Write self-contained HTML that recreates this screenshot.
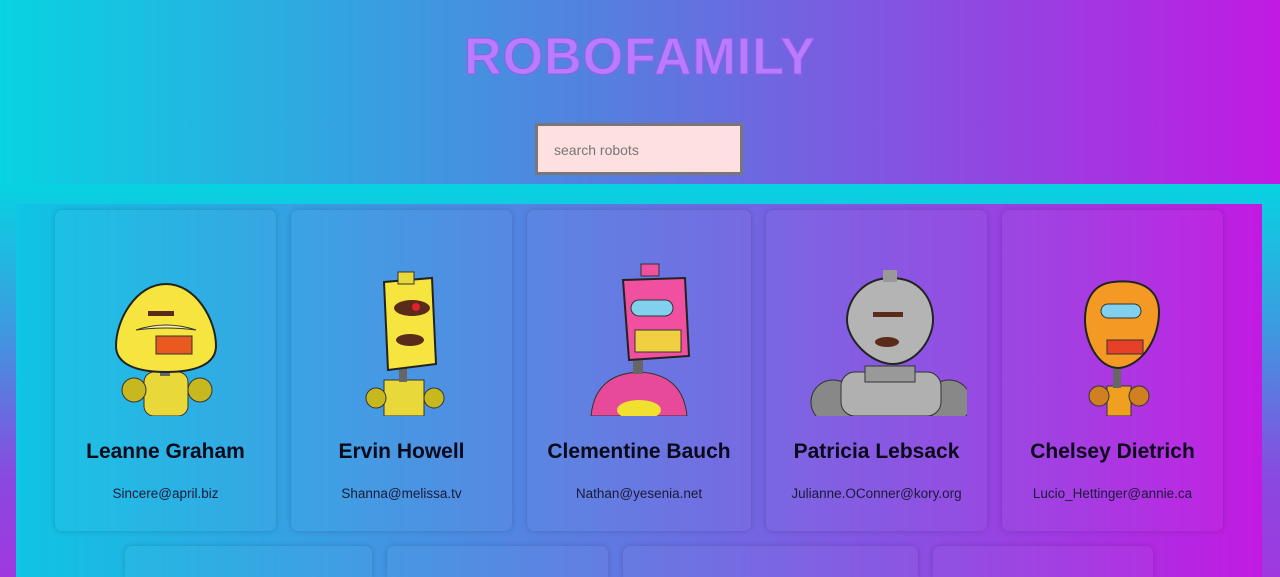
<!DOCTYPE html>
<html style="overflow:hidden;height:577px"><head><style>
*{margin:0;padding:0;box-sizing:border-box}
body{width:1280px;height:577px;overflow:hidden;position:relative;font-family:"Liberation Sans",sans-serif}
.hdr{position:absolute;left:0;top:0;width:1280px;height:184px;background:linear-gradient(to right,#08d3e1,#5a7ae0 50%,#c11ae2)}
.low{position:absolute;left:0;top:184px;width:1280px;height:393px;background:linear-gradient(to bottom,#07d3e1 0%,#3a9ee0 35%,#8a48e0 75%,#a038e0 100%)}
.inner{position:absolute;left:16px;top:204px;width:1246px;height:373px;background:linear-gradient(to right,#0fc4e4,#5b7de2 45%,#8f4ae2 75%,#c21ae2)}
h1{position:absolute;left:0;width:1280px;top:28px;text-align:center;font-size:52px;font-weight:bold;color:#b77cff;letter-spacing:1px;-webkit-text-stroke:1px #9a5ae8;line-height:58px}
.search{position:absolute;left:535px;top:123px;width:208px;height:52px;background:#ffe0e0;border:3px solid #7a7577;font-size:14px;color:#777;padding:16px 0 0 16px}
.card{position:absolute;top:210px;height:321px;border-radius:7px;background:rgba(255,255,255,0.03);box-shadow:0 0 6px rgba(0,0,0,0.18);text-align:center}
.card .n{position:absolute;left:0;right:0;top:230px;font-size:21px;font-weight:bold;color:#0a0a1a}
.card .e{position:absolute;left:0;right:0;top:276px;font-size:13.5px;color:#1a1a3a}
.card svg{position:absolute;top:50px;left:50%;margin-left:-90px}
.r2{top:546px;height:31px;border-bottom-left-radius:0;border-bottom-right-radius:0}
</style></head><body>
<div class="hdr"></div>
<h1>ROBOFAMILY</h1>
<div class="search">search robots</div>
<div class="low"></div>
<div class="inner"></div>

<div class="card" style="left:55px;width:221px">
<svg width="180" height="156" viewBox="0 0 180 156"><rect x="68" y="112" width="44" height="44" rx="10" fill="#e8d83a" stroke="#333"/><circle cx="58" cy="130" r="12" fill="#c8b820" stroke="#333"/><circle cx="124" cy="130" r="12" fill="#c8b820" stroke="#333"/><rect x="84" y="100" width="10" height="16" fill="#666"/><path d="M90 24 C120 24 140 60 140 86 C140 104 120 112 90 112 C60 112 40 104 40 86 C40 60 60 24 90 24Z" fill="#f5e53e" stroke="#222" stroke-width="2"/><rect x="72" y="51" width="26" height="5" fill="#5a2a1a"/><path d="M60 70 Q90 60 120 70 Q90 66 60 70Z" fill="#fff3a8" stroke="#333"/><rect x="80" y="76" width="36" height="18" fill="#e85a20" stroke="#333"/></svg>
<div class="n">Leanne Graham</div><div class="e">Sincere@april.biz</div></div>

<div class="card" style="left:291px;width:221px">
<svg width="180" height="156" viewBox="0 0 180 156"><rect x="72" y="120" width="40" height="36" fill="#e8d83a" stroke="#333"/><circle cx="64" cy="138" r="10" fill="#c8b820" stroke="#333"/><circle cx="122" cy="138" r="10" fill="#c8b820" stroke="#333"/><rect x="87" y="106" width="8" height="16" fill="#666"/><path d="M72 22 L120 18 L124 104 L76 110Z" fill="#f5e53e" stroke="#222" stroke-width="2"/><rect x="86" y="12" width="16" height="12" fill="#e8d83a" stroke="#333"/><ellipse cx="100" cy="48" rx="18" ry="8" fill="#5a2a1a"/><circle cx="104" cy="47" r="4" fill="#e0202a"/><ellipse cx="98" cy="80" rx="14" ry="6" fill="#5a2a1a"/></svg>
<div class="n">Ervin Howell</div><div class="e">Shanna@melissa.tv</div></div>

<div class="card" style="left:527px;width:224px">
<svg width="180" height="156" viewBox="0 0 180 156"><path d="M42 156 Q46 114 90 112 Q134 114 138 156Z" fill="#e84a9a" stroke="#333"/><ellipse cx="90" cy="150" rx="22" ry="10" fill="#f0e030"/><rect x="84" y="98" width="10" height="16" fill="#666"/><path d="M74 20 L136 18 L140 96 L80 100Z" fill="#f0509f" stroke="#222" stroke-width="2"/><rect x="92" y="4" width="18" height="12" fill="#f0509f" stroke="#333"/><rect x="82" y="40" width="42" height="16" rx="8" fill="#80d0ee" stroke="#333"/><rect x="86" y="70" width="46" height="22" fill="#f0d040" stroke="#333"/></svg>
<div class="n">Clementine Bauch</div><div class="e">Nathan@yesenia.net</div></div>

<div class="card" style="left:766px;width:221px">
<svg width="180" height="156" viewBox="0 0 180 156"><circle cx="46" cy="142" r="22" fill="#888" stroke="#333"/><circle cx="162" cy="142" r="22" fill="#888" stroke="#333"/><rect x="54" y="112" width="100" height="44" rx="14" fill="#b0b0b0" stroke="#333"/><rect x="78" y="106" width="50" height="16" fill="#999" stroke="#333"/><path d="M104 18 C134 18 146 40 146 60 C146 80 128 104 106 104 C84 104 60 80 60 60 C60 40 76 18 104 18Z" fill="#b4b4b4" stroke="#222" stroke-width="2"/><rect x="96" y="10" width="14" height="12" fill="#999"/><rect x="86" y="52" width="30" height="5" fill="#5a2a1a"/><ellipse cx="100" cy="82" rx="12" ry="5" fill="#5a2a1a"/></svg>
<div class="n">Patricia Lebsack</div><div class="e">Julianne.OConner@kory.org</div></div>

<div class="card" style="left:1002px;width:221px">
<svg width="180" height="156" viewBox="0 0 180 156"><rect x="84" y="126" width="24" height="30" fill="#f0a020" stroke="#333"/><circle cx="76" cy="136" r="10" fill="#d08020" stroke="#333"/><circle cx="116" cy="136" r="10" fill="#d08020" stroke="#333"/><rect x="90" y="106" width="8" height="22" fill="#666"/><path d="M90 22 C124 18 136 34 136 52 C136 80 118 106 96 108 C74 108 62 80 62 60 C62 40 70 24 90 22Z" fill="#f49a24" stroke="#222" stroke-width="2"/><rect x="78" y="44" width="40" height="14" rx="7" fill="#80d0ee" stroke="#333"/><rect x="84" y="80" width="36" height="14" fill="#e84028" stroke="#333"/></svg>
<div class="n">Chelsey Dietrich</div><div class="e">Lucio_Hettinger@annie.ca</div></div>

<div class="card r2" style="left:125px;width:247px"></div>
<div class="card r2" style="left:387px;width:221px"></div>
<div class="card r2" style="left:623px;width:295px"></div>
<div class="card r2" style="left:933px;width:220px"></div>
</body></html>
